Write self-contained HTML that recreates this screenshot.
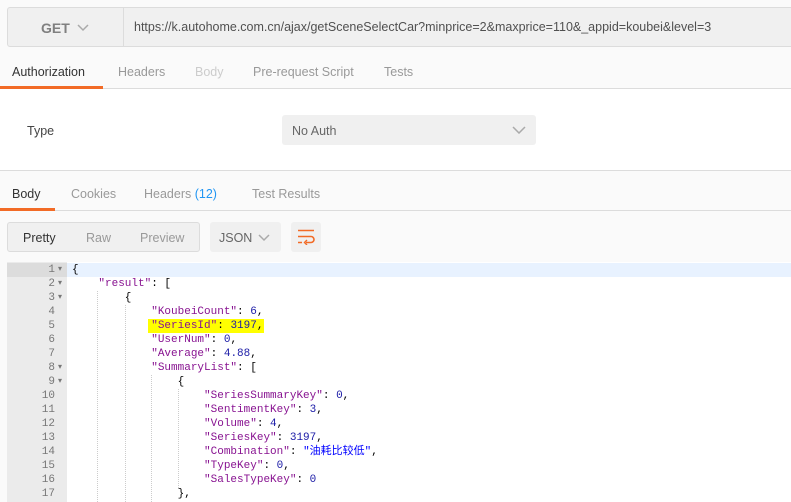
<!DOCTYPE html><html><head><style>
body{margin:0;width:791px;height:502px;overflow:hidden;background:#fafafa;font-family:"Liberation Sans",sans-serif;position:relative}
.a{position:absolute}
.code{font-family:"Liberation Mono",monospace;font-size:11px;line-height:14px;white-space:pre;color:#000}
.k{color:#881391}.n{color:#1a1aa6}.s{color:#0000ff}
.g{color:#777;text-align:right}
.t{font-size:12.5px}
</style></head><body>
<div class="a" style="left:7px;top:7px;width:790px;height:38px;background:#f0f0f0;border:1px solid #dcdcdc;border-radius:3px"></div>
<div class="a" style="left:123px;top:8px;width:1px;height:38px;background:#dcdcdc"></div>
<div class="a" style="left:41px;top:20px;font-size:14px;font-weight:bold;color:#808080">GET</div>
<svg class="a" style="left:77px;top:24px" width="12" height="8"><path d="M1 1l5 5 5-5" stroke="#aaa" stroke-width="1.5" fill="none"/></svg>
<div class="a" style="left:134px;top:20px;font-size:12.5px;color:#505050">https://k.autohome.com.cn/ajax/getSceneSelectCar?minprice=2&amp;maxprice=110&amp;_appid=koubei&amp;level=3</div>
<div class="a" style="left:0;top:88px;width:791px;height:1px;background:#dcdcdc"></div>
<div class="a" style="left:0;top:86px;width:103px;height:3px;background:#f26b26"></div>
<div class="a t" style="left:12px;top:65px;color:#333">Authorization</div>
<div class="a t" style="left:118px;top:65px;color:#999">Headers</div>
<div class="a t" style="left:195px;top:65px;color:#ccc">Body</div>
<div class="a t" style="left:253px;top:65px;color:#999">Pre-request Script</div>
<div class="a t" style="left:384px;top:65px;color:#999">Tests</div>
<div class="a" style="left:0;top:89px;width:791px;height:81px;background:#fff"></div>
<div class="a t" style="left:27px;top:124px;color:#444">Type</div>
<div class="a" style="left:282px;top:115px;width:254px;height:30px;background:#f0f0f0;border-radius:3px"></div>
<div class="a t" style="left:292px;top:124px;color:#666">No Auth</div>
<svg class="a" style="left:512px;top:126px" width="14" height="8"><path d="M1 1l6 6 6-6" stroke="#aaa" stroke-width="1.5" fill="none"/></svg>
<div class="a" style="left:0;top:170px;width:791px;height:1px;background:#dcdcdc"></div>
<div class="a" style="left:0;top:210px;width:791px;height:1px;background:#dcdcdc"></div>
<div class="a" style="left:0;top:208px;width:55px;height:3px;background:#f26b26"></div>
<div class="a t" style="left:12px;top:187px;color:#333">Body</div>
<div class="a t" style="left:71px;top:187px;color:#999">Cookies</div>
<div class="a t" style="left:144px;top:187px;color:#999">Headers <span style="color:#2196f3">(12)</span></div>
<div class="a t" style="left:252px;top:187px;color:#999">Test Results</div>
<div class="a" style="left:7px;top:222px;width:191px;height:28px;background:#f0f0f0;border:1px solid #dcdcdc;border-radius:3px"></div>
<div class="a t" style="left:23px;top:231px;color:#333">Pretty</div>
<div class="a t" style="left:86px;top:231px;color:#999">Raw</div>
<div class="a t" style="left:140px;top:231px;color:#999">Preview</div>
<div class="a" style="left:210px;top:222px;width:71px;height:30px;background:#f0f0f0;border-radius:3px"></div>
<div class="a t" style="left:219px;top:231px;color:#666">JSON</div>
<svg class="a" style="left:258px;top:234px" width="12" height="8"><path d="M1 1l5 5 5-5" stroke="#aaa" stroke-width="1.5" fill="none"/></svg>
<div class="a" style="left:291px;top:222px;width:30px;height:30px;background:#f0f0f0;border-radius:3px"></div>
<svg class="a" style="left:297px;top:229px" width="18" height="16"><path d="M1 1.5h16M1 7.5h13a3 3 0 0 1 0 6h-5M1 13.5h4" stroke="#f26b26" stroke-width="1.6" fill="none"/><path d="M10 11l-2.5 2.5 2.5 2.5" stroke="#f26b26" stroke-width="1.4" fill="none"/></svg>
<div class="a" style="left:7px;top:262px;width:784px;height:240px;background:#fff"></div>
<div class="a" style="left:7px;top:262px;width:60px;height:240px;background:#ebebeb"></div>
<div class="a" style="left:7px;top:263px;width:60px;height:14px;background:#dcdcdc"></div>
<div class="a" style="left:67px;top:263px;width:724px;height:14px;background:#e8f2ff"></div>
<div class="a" style="left:97px;top:291px;height:211px;border-left:1px dotted #ccc"></div>
<div class="a" style="left:125px;top:305px;height:197px;border-left:1px dotted #ccc"></div>
<div class="a" style="left:151px;top:375px;height:127px;border-left:1px dotted #ccc"></div>
<div class="a" style="left:178px;top:389px;height:99px;border-left:1px dotted #ccc"></div>
<div class="a" style="left:148px;top:319px;width:116px;height:14px;background:#ffff00"></div>
<div class="a code g" style="left:7px;top:263px;width:48px">1
2
3
4
5
6
7
8
9
10
11
12
13
14
15
16
17</div>
<div class="a code" style="left:58px;top:263px;color:#777;font-size:8px;line-height:14px">▾
▾
▾




▾
▾</div>
<div class="a code" style="left:72px;top:263px">{
    <span class="k">"result"</span>: [
        {
            <span class="k">"KoubeiCount"</span>: <span class="n">6</span>,
            <span class="k">"SeriesId"</span>: <span class="n">3197</span>,
            <span class="k">"UserNum"</span>: <span class="n">0</span>,
            <span class="k">"Average"</span>: <span class="n">4.88</span>,
            <span class="k">"SummaryList"</span>: [
                {
                    <span class="k">"SeriesSummaryKey"</span>: <span class="n">0</span>,
                    <span class="k">"SentimentKey"</span>: <span class="n">3</span>,
                    <span class="k">"Volume"</span>: <span class="n">4</span>,
                    <span class="k">"SeriesKey"</span>: <span class="n">3197</span>,
                    <span class="k">"Combination"</span>: <span class="s">"<span style="font-family:'Noto Sans CJK SC',sans-serif;font-size:11px;line-height:1">油耗比较低</span>"</span>,
                    <span class="k">"TypeKey"</span>: <span class="n">0</span>,
                    <span class="k">"SalesTypeKey"</span>: <span class="n">0</span>
                },</div>
</body></html>
